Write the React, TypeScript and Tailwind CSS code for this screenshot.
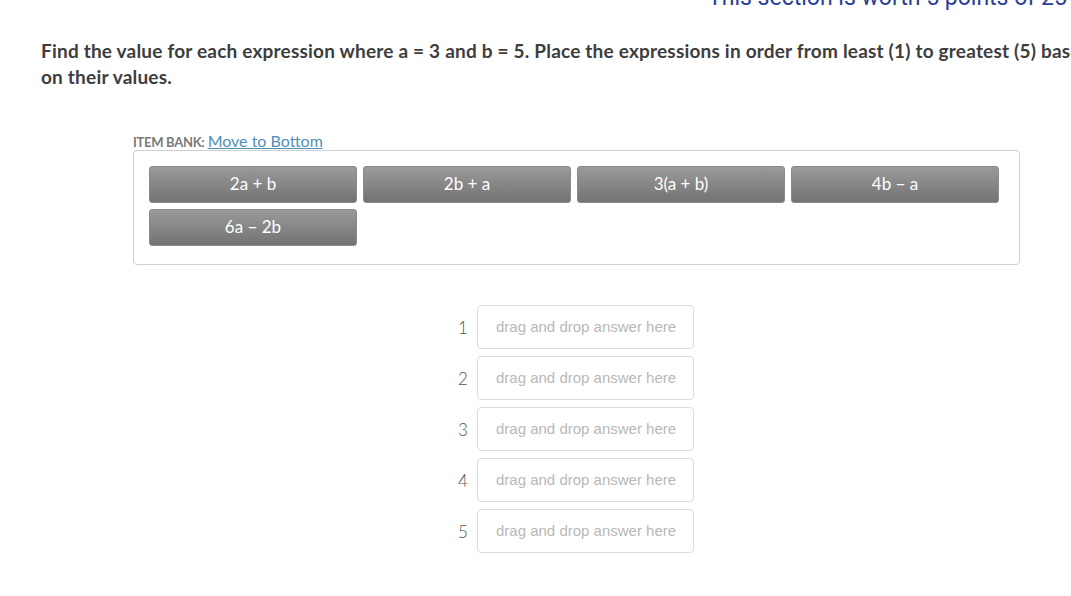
import React from "react";

const items = ["2a + b", "2b + a", "3(a + b)", "4b \u2212 a", "6a \u2212 2b"];

export default function App() {
  return (
    <div className="w-[1071px] h-[596px] overflow-hidden bg-white relative" style={{ fontFamily: "Lato, 'Open Sans', sans-serif" }}>
      <div className="h-[9px] relative overflow-visible">
        <div className="absolute left-[708px] top-[-16px] whitespace-nowrap text-[23px] leading-[28px] text-[#2b3d9a]" style={{ fontFamily: "Roboto, sans-serif" }}>
          This section is worth 5 points of 25
        </div>
      </div>
      <div className="pl-[41px] pt-[29px] text-[19px] leading-[26px] font-bold text-[#3d3d3d] whitespace-nowrap tracking-[0.2px]">
        <div>Find the value for each expression where a = 3 and b = 5. Place the expressions in order from least (1) to greatest (5) based</div>
        <div>on their values.</div>
      </div>
      <div className="ml-[133px] mt-[43px] w-[887px]">
        <div className="text-[13px] leading-[16px] text-[#7a7a7a] h-[16px]">
          <span className="font-bold tracking-[-0.3px]">ITEM BANK:</span>{" "}
          <span className="text-[#4f8fb8] underline text-[16px]">Move to Bottom</span>
        </div>
        <div className="mt-[1px] border border-[#cfcfcf] rounded-[4px] pt-[15px] pl-[15px] pr-[20px] pb-[18px]">
          <div className="grid grid-cols-4 gap-x-[6px] gap-y-[6px]">
            {items.map((t) => (
              <div
                key={t}
                className="h-[37px] rounded-[3px] bg-gradient-to-b from-[#9a9a9a] to-[#737373] flex items-center justify-center text-white text-[17px] pb-[2px] border border-[#8a8a8a]"
              >
                {t}
              </div>
            ))}
          </div>
        </div>
      </div>
      <div className="mt-[40px] flex flex-col gap-[7px] pl-[458px]">
        {[1, 2, 3, 4, 5].map((n) => (
          <div key={n} className="flex items-center">
            <div className="w-[19px] text-[17px] text-[#555] font-light pt-[1px]">{n}</div>
            <div
              className="w-[217px] h-[44px] border border-[#dcdcdc] rounded-[4px] flex items-center pl-[18px] text-[15px] text-[#b8b8b8]"
              style={{ fontFamily: "'Liberation Sans', Arial, sans-serif" }}
            >
              drag and drop answer here
            </div>
          </div>
        ))}
      </div>
    </div>
  );
}
